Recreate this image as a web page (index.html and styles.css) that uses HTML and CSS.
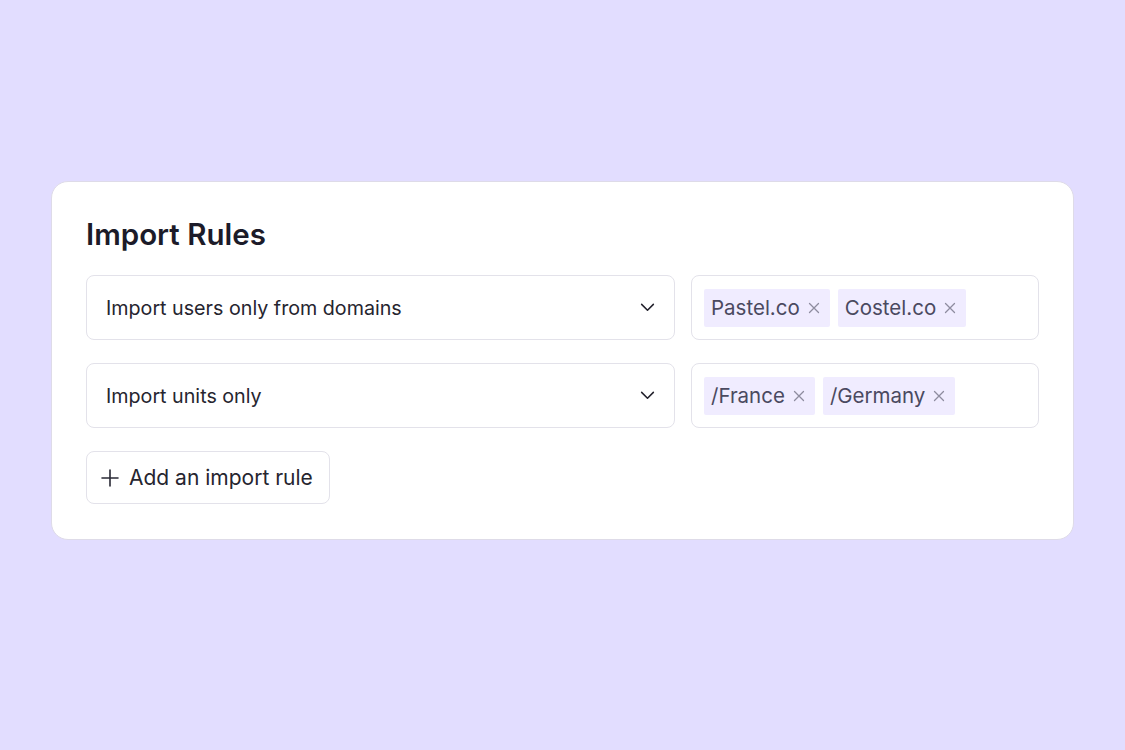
FILE: index.html
```html
<!DOCTYPE html>
<html lang="en">
<head>
<meta charset="utf-8">
<title>Import Rules</title>
<link rel="stylesheet" href="styles.css">
</head>
<body>
<main class="stage">
  <section class="card">
    <h1 class="card-title">Import Rules</h1>
    <div class="rules">
      <div class="rule">
        <div class="select">
          <span class="select-label">Import users only from domains</span>
          <svg class="chevron" viewBox="0 0 16 10" width="15" height="9"><path d="M1.5 1.5 8 8 14.5 1.5" fill="none" stroke="#22212c" stroke-width="1.7" stroke-linecap="round" stroke-linejoin="round"/></svg>
        </div>
        <div class="tags">
          <span class="tag">Pastel.co <svg class="tag-x" viewBox="0 0 12 12" width="12" height="12"><path d="M1.5 1.5l9 9M10.5 1.5l-9 9" fill="none" stroke="#8e8c9f" stroke-width="1.3" stroke-linecap="round"/></svg></span>
          <span class="tag">Costel.co <svg class="tag-x" viewBox="0 0 12 12" width="12" height="12"><path d="M1.5 1.5l9 9M10.5 1.5l-9 9" fill="none" stroke="#8e8c9f" stroke-width="1.3" stroke-linecap="round"/></svg></span>
        </div>
      </div>
      <div class="rule">
        <div class="select">
          <span class="select-label">Import units only</span>
          <svg class="chevron" viewBox="0 0 16 10" width="15" height="9"><path d="M1.5 1.5 8 8 14.5 1.5" fill="none" stroke="#22212c" stroke-width="1.7" stroke-linecap="round" stroke-linejoin="round"/></svg>
        </div>
        <div class="tags">
          <span class="tag">/France <svg class="tag-x" viewBox="0 0 12 12" width="12" height="12"><path d="M1.5 1.5l9 9M10.5 1.5l-9 9" fill="none" stroke="#8e8c9f" stroke-width="1.3" stroke-linecap="round"/></svg></span>
          <span class="tag">/Germany <svg class="tag-x" viewBox="0 0 12 12" width="12" height="12"><path d="M1.5 1.5l9 9M10.5 1.5l-9 9" fill="none" stroke="#8e8c9f" stroke-width="1.3" stroke-linecap="round"/></svg></span>
        </div>
      </div>
    </div>
    <button class="add-btn" type="button">
      <svg class="plus" viewBox="0 0 18 18" width="18" height="18"><path d="M9 1v16M1 9h16" fill="none" stroke="#2a2a36" stroke-width="1.6" stroke-linecap="round"/></svg>
      <span>Add an import rule</span>
    </button>
  </section>
</main>
</body>
</html>
```

FILE: styles.css
```css
* { box-sizing: border-box; }

html, body {
  margin: 0;
  height: 100%;
}

body {
  background: #e2ddff;
  font-family: Inter, "Noto Sans", sans-serif;
  color: #26252f;
}

.stage {
  padding: 181px 51px 0 51px;
}

.card {
  background: #ffffff;
  border: 1px solid #dedbe8;
  border-radius: 17px;
  padding: 35px 34px 35px 34px;
}

.card-title {
  margin: 0 0 23px 0;
  font-size: 29.5px;
  line-height: 35px;
  font-weight: 600;
  color: #1c1b29;
}

.rules {
  display: flex;
  flex-direction: column;
  gap: 23px;
}

.rule {
  display: flex;
  gap: 16px;
}

.select {
  flex: 0 0 589px;
  height: 65px;
  border: 1.5px solid #e3e2ea;
  border-radius: 8px;
  display: flex;
  align-items: center;
  justify-content: space-between;
  padding: 0 19px 0 19px;
}

.select-label {
  font-size: 19.7px;
  color: #26252f;
}

.chevron { display: block; }

.tags {
  flex: 1 1 auto;
  height: 65px;
  border: 1.5px solid #e3e2ea;
  border-radius: 8px;
  display: flex;
  align-items: center;
  gap: 8px;
  padding: 0 12px;
}

.tag {
  display: inline-flex;
  align-items: center;
  gap: 8px;
  height: 38px;
  padding: 0 10px 0 7px;
  background: #f0ecff;
  border-radius: 2px;
  font-size: 20.5px;
  color: #4a4960;
}

.tag-x { display: block; }

.add-btn {
  margin-top: 23px;
  display: inline-flex;
  align-items: center;
  gap: 10px;
  height: 53px;
  padding: 0 16px 0 14px;
  background: #ffffff;
  border: 1.5px solid #e3e2ea;
  border-radius: 8px;
  font-family: inherit;
  font-size: 21px;
  color: #26252f;
}

.plus { display: block; }
```
